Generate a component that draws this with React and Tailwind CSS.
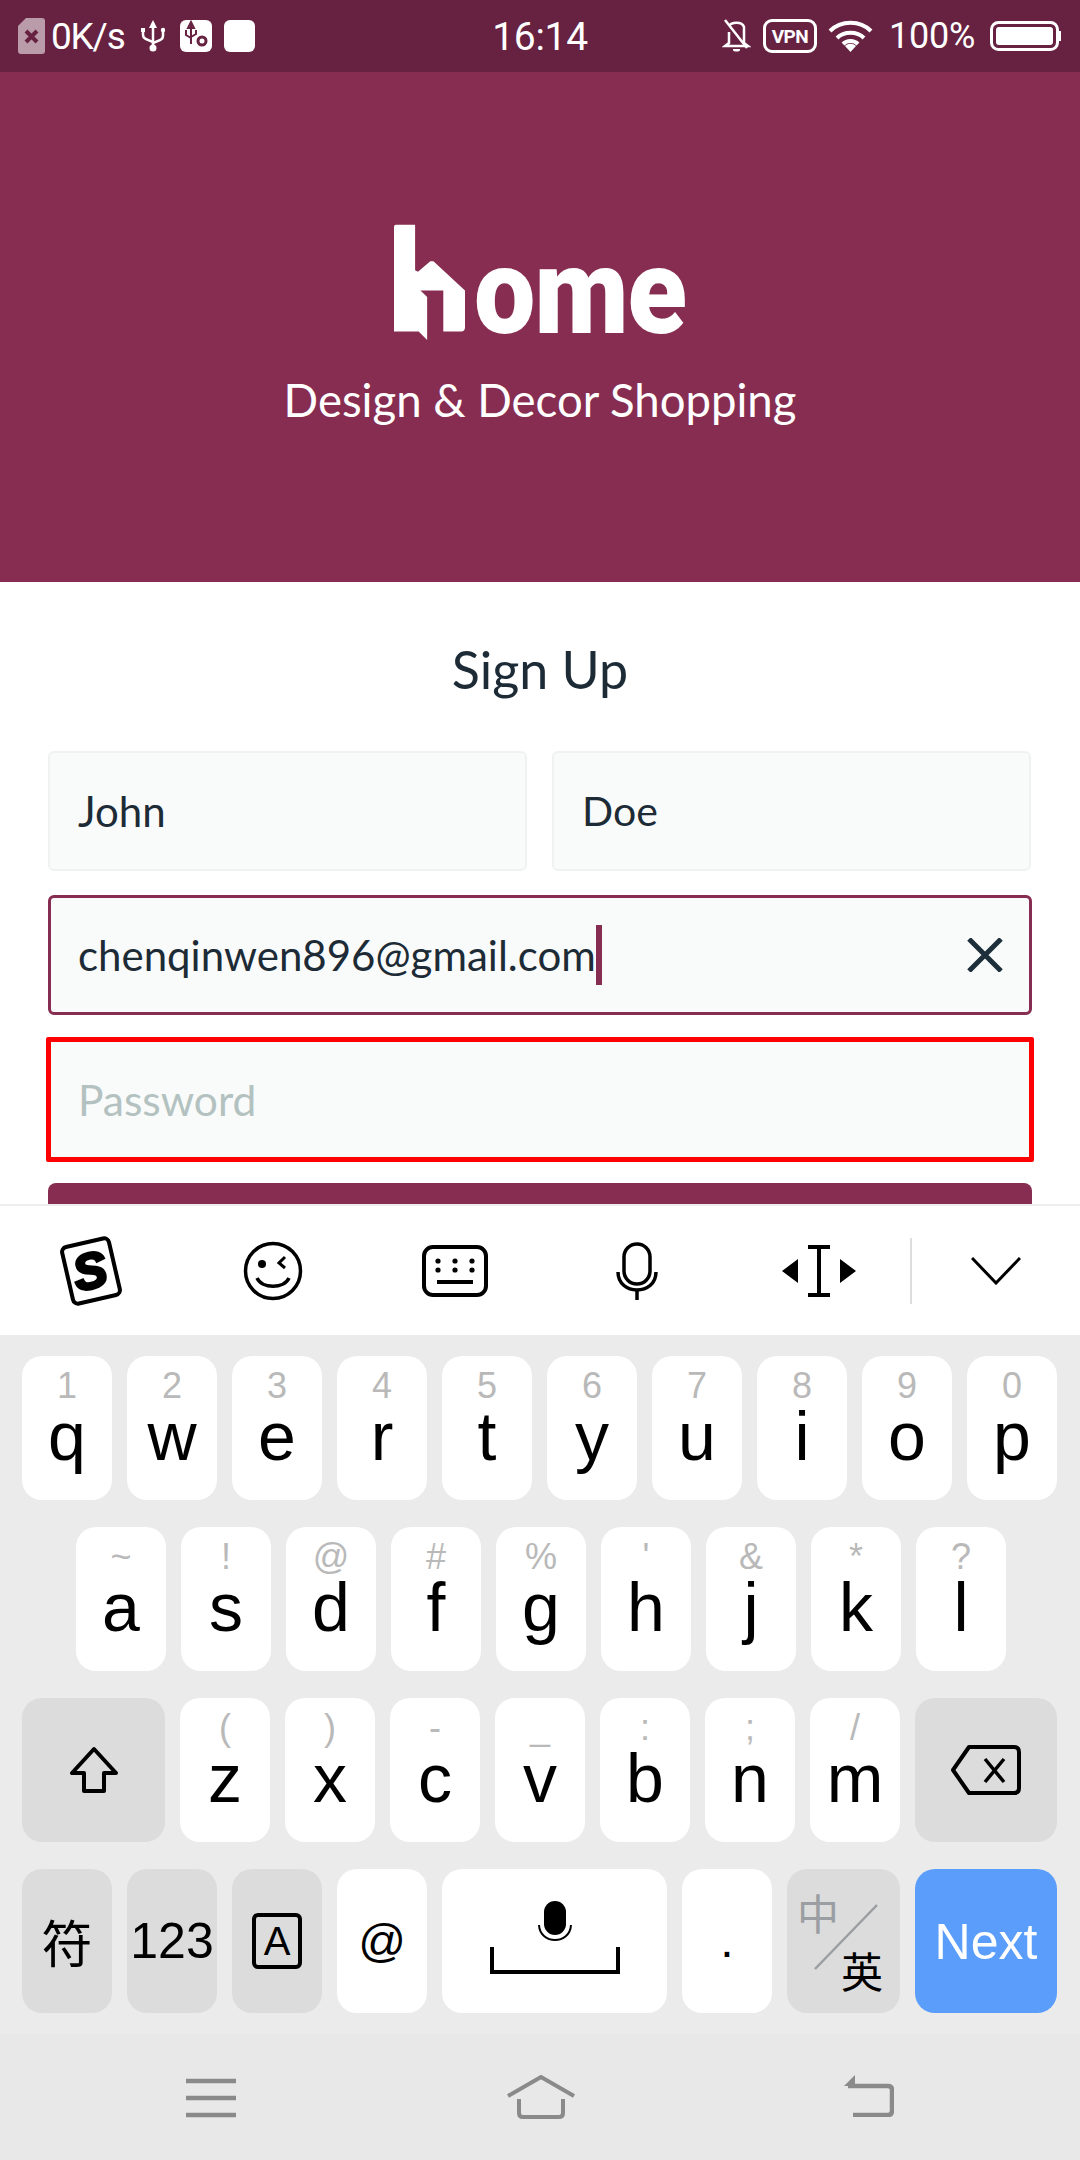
import React from "react";

const sans = "font-['Liberation_Sans',Arial,sans-serif]";

const row1 = [["1", "q"], ["2", "w"], ["3", "e"], ["4", "r"], ["5", "t"], ["6", "y"], ["7", "u"], ["8", "i"], ["9", "o"], ["0", "p"]];
const row2 = [["~", "a"], ["!", "s"], ["@", "d"], ["#", "f"], ["%", "g"], ["'", "h"], ["&", "j"], ["*", "k"], ["?", "l"]];
const row3 = [["(", "z"], [")", "x"], ["-", "c"], ["_", "v"], [":", "b"], [";", "n"], ["/", "m"]];

function LetterKey({ hint, letter }) {
    return (
        <div className="w-[90px] h-[144px] bg-white rounded-[20px] flex flex-col items-center">
            <div className="mt-[10px] h-[40px] text-[36px] leading-[40px] text-[#b9b9b9]">{hint}</div>
            <div className="mt-[2px] text-[68px] leading-[56px] text-black">{letter}</div>
        </div>
    );
}

function StatusBar() {
    return (
        <div className="h-[72px] bg-[#662240] flex items-center text-white text-[36px] leading-none font-['Roboto',sans-serif]">
            <svg className="ml-[18px]" width="27" height="36" viewBox="0 0 27 36">
                <path d="M8 0H24a3 3 0 0 1 3 3V33a3 3 0 0 1-3 3H3a3 3 0 0 1-3-3V8Z" fill="#ffffff" fillOpacity="0.55" />
                <path d="M8 13 19 24M19 13 8 24" stroke="#662240" strokeWidth="4" />
            </svg>
            <span className="ml-[6px] w-[74px] text-[37px] tracking-[-1.2px]">0K/s</span>
            <svg className="ml-[16px]" width="24" height="32" viewBox="0 0 24 32" fill="none" stroke="#ffffff" strokeWidth="2.5">
                <path d="M12 3V27" />
                <path d="M12 0 8 8H16Z" fill="#ffffff" stroke="none" />
                <circle cx="12" cy="28" r="3.5" fill="#ffffff" stroke="none" />
                <path d="M2 11V15C2 18 4 19 12 22" />
                <path d="M22 11V16C22 19 20 20 12 23" />
                <rect x="0" y="8" width="4" height="4" fill="#ffffff" stroke="none" />
                <circle cx="22" cy="10" r="2.2" fill="#ffffff" stroke="none" />
            </svg>
            <svg className="ml-[15px]" width="32" height="32" viewBox="0 0 32 32">
                <rect width="32" height="32" rx="6" fill="#ffffff" />
                <path d="M11 4V24M11 2 8 8H14ZM6 10V15L11 18M16 10V14L11 17" stroke="#662240" strokeWidth="2" fill="none" />
                <circle cx="22" cy="21" r="4" fill="none" stroke="#662240" strokeWidth="3" />
            </svg>
            <div className="ml-[12px] w-[31px] h-[32px] bg-white rounded-[6px]"></div>
            <span className="ml-[236px] mt-[2px] w-[98px] text-[39px] tracking-[-0.3px] text-center">16:14</span>
            <svg className="ml-[133px]" width="29" height="34" viewBox="0 0 29 34" fill="none" stroke="#ffffff" strokeWidth="2.5">
                <path d="M7 7C9 3 20 2 22 8V24L26 27H3L7 24V13" />
                <path d="M11 30H18V31C18 33 11 33 11 31Z" fill="#ffffff" stroke="none" />
                <path d="M3 1 25 29" />
            </svg>
            <div className="ml-[12px] w-[54px] h-[34px] border-[3px] border-white rounded-[9px] flex items-center justify-center text-[19px] font-bold tracking-[-0.5px]">VPN</div>
            <svg className="ml-[11px]" width="45" height="32" viewBox="0 0 45 32" fill="none" stroke="#ffffff" strokeWidth="4">
                <path d="M2 11C13 0 32 0 43 11" />
                <path d="M9 18C16 11 29 11 36 18" />
                <path d="M15 24C19 20 26 20 30 24" />
                <path d="M17 26 22.5 32 28 26C25 23 20 23 17 26Z" fill="#ffffff" stroke="none" />
            </svg>
            <span className="ml-[16px] w-[87px] tracking-[-0.2px]">100%</span>
            <svg className="ml-[14px]" width="71" height="30" viewBox="0 0 71 30">
                <rect x="1.5" y="1.5" width="66" height="27" rx="7" fill="none" stroke="#ffffff" strokeWidth="3" />
                <rect x="6" y="6" width="57" height="18" rx="3" fill="#ffffff" />
                <rect x="69" y="10" width="2" height="10" fill="#ffffff" />
            </svg>
        </div>
    );
}

function Header() {
    return (
        <div className="h-[510px] bg-[#872d51] flex flex-col items-center text-white">
            <div className="mt-[152px] h-[116px] w-[292px] flex items-start">
                <svg width="72" height="117" viewBox="0 0 72 117">
                    <path d="M2 0H21.4V46L24.3 47.7 36.8 37H40L72 66.7V104Q72 108.3 68 108.3H50V66.7H26.8L33.6 73.3V116.7L25 108.3H0V2Q0 0 2 0Z" fill="#ffffff" />
                </svg>
                <div className="ml-[9px] mt-[28px] w-[212px] text-[120px] leading-[80px] font-black font-['Roboto',sans-serif] origin-left scale-x-[0.91] tracking-[-1px]">ome</div>
            </div>
            <div className="mt-[35px] text-[45.5px] leading-[50px] font-['Lato',sans-serif]">Design &amp; Decor Shopping</div>
        </div>
    );
}

function Form() {
    return (
        <div className="h-[622px] bg-white overflow-hidden px-[48px] font-['Lato',sans-serif] text-[#1d2b36]">
            <div className="mt-[59px] text-center text-[52px] leading-[56px]">Sign Up</div>
            <div className="mt-[54px] flex gap-[25px]">
                <div className="w-[479px] h-[120px] bg-[#f9fbfa] border-2 border-[#eef3f2] rounded-[6px] flex items-center pl-[28px] text-[42px]">John</div>
                <div className="w-[479px] h-[120px] bg-[#f9fbfa] border-2 border-[#eef3f2] rounded-[6px] flex items-center pl-[28px] text-[41px]">Doe</div>
            </div>
            <div className="mt-[24px] h-[120px] bg-[#f9fbfa] border-[3px] border-[#872d51] rounded-[6px] flex items-center pl-[27px] text-[42px]">
                <span>chenqinwen896@gmail.com</span>
                <span className="w-[6px] h-[60px] bg-[#872d51]"></span>
                <svg className="ml-auto mr-[26px]" width="36" height="34" viewBox="0 0 36 34" fill="none" stroke="#1d2f3a" strokeWidth="5">
                    <path d="M2 1 34 33M34 1 2 33" />
                </svg>
            </div>
            <div className="mt-[22px] mx-[-2px] h-[125px] bg-[#f9fbfa] border-[5px] border-[#ff0000] rounded-[2px] flex items-center pl-[27px] text-[42.5px] text-[#b3c2c0]">Password</div>
            <div className="mt-[21px] h-[60px] bg-[#872d51] rounded-t-[8px]"></div>
        </div>
    );
}

function Toolbar() {
    return (
        <div className="h-[131px] bg-white border-t-[2px] border-[#eeeeee] flex items-center">
            <div className="w-[182px] flex justify-center">
                <svg className="overflow-visible" width="66" height="66" viewBox="0 0 66 66">
                    <g transform="rotate(-13 33 33)">
                        <rect x="9" y="4" width="48" height="58" rx="5" fill="#ffffff" stroke="#000000" strokeWidth="4" />
                        <text x="32" y="50" textAnchor="middle" fontSize="50" fontWeight="700" fontStyle="italic" fontFamily="Liberation Sans" stroke="#000000" strokeWidth="3">S</text>
                    </g>
                </svg>
            </div>
            <div className="w-[182px] flex justify-center">
                <svg width="60" height="60" viewBox="0 0 60 60" fill="none" stroke="#000000" strokeWidth="3.5">
                    <circle cx="30" cy="30" r="27.5" />
                    <circle cx="19" cy="23" r="4" fill="#000000" stroke="none" />
                    <path d="M42 16 36 22 42 27" strokeWidth="3" />
                    <path d="M14 37C19 48 41 48 46 37" />
                </svg>
            </div>
            <div className="w-[182px] flex justify-center">
                <svg width="66" height="52" viewBox="0 0 66 52" fill="none" stroke="#000000" strokeWidth="4">
                    <rect x="2" y="2" width="62" height="48" rx="9" />
                    <g fill="#000000" stroke="none">
                        <circle cx="16" cy="16" r="2.6" /><circle cx="33" cy="16" r="2.6" /><circle cx="50" cy="16" r="2.6" />
                        <circle cx="16" cy="25" r="2.6" /><circle cx="33" cy="25" r="2.6" /><circle cx="50" cy="25" r="2.6" />
                    </g>
                    <path d="M15 37H51" />
                </svg>
            </div>
            <div className="w-[182px] flex justify-center">
                <svg width="42" height="58" viewBox="0 0 42 58" fill="none" stroke="#000000" strokeWidth="3.5">
                    <rect x="8" y="2" width="26" height="40" rx="13" />
                    <path d="M2 30C2 54 40 54 40 30" />
                    <path d="M21 48V58" />
                </svg>
            </div>
            <div className="w-[182px] flex justify-center">
                <svg width="76" height="52" viewBox="0 0 76 52">
                    <path d="M17 14V38L1 26ZM59 14V38L75 26Z" fill="#000000" />
                    <path d="M27 2H49M27 50H49M38 2V50" stroke="#000000" strokeWidth="4" fill="none" />
                </svg>
            </div>
            <div className="w-[2px] h-[66px] bg-[#dddddd]"></div>
            <div className="flex-1 flex justify-center">
                <svg width="50" height="28" viewBox="0 0 50 28" fill="none" stroke="#000000" strokeWidth="3">
                    <path d="M1 1 25 26 49 1" />
                </svg>
            </div>
        </div>
    );
}

function Keyboard() {
    return (
        <div className={`h-[699px] bg-[#ebebeb] pt-[21px] flex flex-col gap-[27px] ${sans}`}>
            <div className="flex gap-[15px] pl-[22px]">
                {row1.map((k) => <LetterKey key={k[1]} hint={k[0]} letter={k[1]} />)}
            </div>
            <div className="flex gap-[15px] pl-[76px]">
                {row2.map((k) => <LetterKey key={k[1]} hint={k[0]} letter={k[1]} />)}
            </div>
            <div className="flex gap-[15px] pl-[22px]">
                <div className="w-[143px] h-[144px] bg-[#dcdcdc] rounded-[20px] flex items-center justify-center">
                    <svg width="50" height="48" viewBox="0 0 50 48" fill="none" stroke="#000000" strokeWidth="4">
                        <path d="M25 3 3 27H15V45H35V27H47Z" strokeLinejoin="round" />
                    </svg>
                </div>
                {row3.map((k) => <LetterKey key={k[1]} hint={k[0]} letter={k[1]} />)}
                <div className="w-[142px] h-[144px] bg-[#dcdcdc] rounded-[20px] flex items-center justify-center">
                    <svg width="70" height="50" viewBox="0 0 70 50" fill="none" stroke="#000000" strokeWidth="4">
                        <path d="M18 2H63Q68 2 68 7V43Q68 48 63 48H18L2 25Z" strokeLinejoin="round" />
                        <path d="M34 14 53 37M53 14 34 37" strokeWidth="3.5" />
                    </svg>
                </div>
            </div>
            <div className="flex gap-[15px] pl-[22px]">
                <div className="w-[90px] h-[144px] bg-[#dcdcdc] rounded-[20px] flex items-center justify-center text-[51px] text-black font-['Noto_Sans_CJK_SC',sans-serif]">符</div>
                <div className="w-[90px] h-[144px] bg-[#dcdcdc] rounded-[20px] flex items-center justify-center text-[50px] text-black">123</div>
                <div className="w-[90px] h-[144px] bg-[#dcdcdc] rounded-[20px] flex items-center justify-center">
                    <div className="w-[50px] h-[56px] border-[4px] border-black rounded-[6px] flex items-center justify-center text-[40px] text-black">A</div>
                </div>
                <div className="w-[90px] h-[144px] bg-white rounded-[20px] flex items-center justify-center text-[47px] text-black">@</div>
                <div className="w-[225px] h-[144px] bg-white rounded-[20px] flex flex-col items-center pt-[32px]">
                    <svg width="36" height="42" viewBox="0 0 36 42" fill="none">
                        <rect x="7" y="0" width="22" height="34" rx="11" fill="#000000" />
                        <path d="M2 24C3 44 33 44 34 24" stroke="#000000" strokeWidth="2" />
                    </svg>
                    <svg className="mt-[4px]" width="130" height="27" viewBox="0 0 130 27" fill="none" stroke="#000000" strokeWidth="4">
                        <path d="M2 0V25H128V0" />
                    </svg>
                </div>
                <div className="w-[90px] h-[144px] bg-white rounded-[20px] flex items-center justify-center text-[48px] text-black">.</div>
                <div className="relative w-[113px] h-[144px] bg-[#dcdcdc] rounded-[20px] font-['Noto_Sans_CJK_SC',sans-serif]">
                    <span className="absolute left-[10px] top-[20px] text-[42px] leading-[46px] text-[#9a9da1]">中</span>
                    <svg className="absolute left-[26px] top-[35px]" width="66" height="66" viewBox="0 0 66 66">
                        <path d="M64 1 2 65" stroke="#9a9da1" strokeWidth="2.5" />
                    </svg>
                    <span className="absolute left-[54px] top-[78px] text-[42px] leading-[46px] text-black">英</span>
                </div>
                <div className="w-[142px] h-[144px] bg-[#5a9dfb] rounded-[20px] flex items-center justify-center pt-[3px] text-[50px] text-white">Next</div>
            </div>
        </div>
    );
}

function NavBar() {
    return (
        <div className="h-[126px] bg-[#e8e8e8] flex items-start">
            <svg className="ml-[186px] mt-[44px]" width="50" height="40" viewBox="0 0 50 40" fill="none" stroke="#8a8a8a" strokeWidth="4.5">
                <path d="M0 3H50M0 20H50M0 37H50" />
            </svg>
            <svg className="ml-[270px] mt-[41px]" width="70" height="44" viewBox="0 0 70 44" fill="none" stroke="#8a8a8a" strokeWidth="4">
                <path d="M2 21 35 2 68 21" />
                <path d="M13 24V38Q13 42 17 42H53Q57 42 57 38V24" />
            </svg>
            <svg className="ml-[268px] mt-[41px]" width="50" height="42" viewBox="0 0 50 42" fill="none" stroke="#8a8a8a" strokeWidth="4.5">
                <path d="M4 11H44Q48 11 48 15V36Q48 40 44 40H9" />
                <path d="M0 11 11 0V11Z" fill="#8a8a8a" stroke="none" />
            </svg>
        </div>
    );
}

function App() {
    return (
        <div className="w-[1080px] h-[2160px] overflow-hidden flex flex-col">
            <StatusBar />
            <Header />
            <Form />
            <Toolbar />
            <Keyboard />
            <NavBar />
        </div>
    );
}

export default App;
